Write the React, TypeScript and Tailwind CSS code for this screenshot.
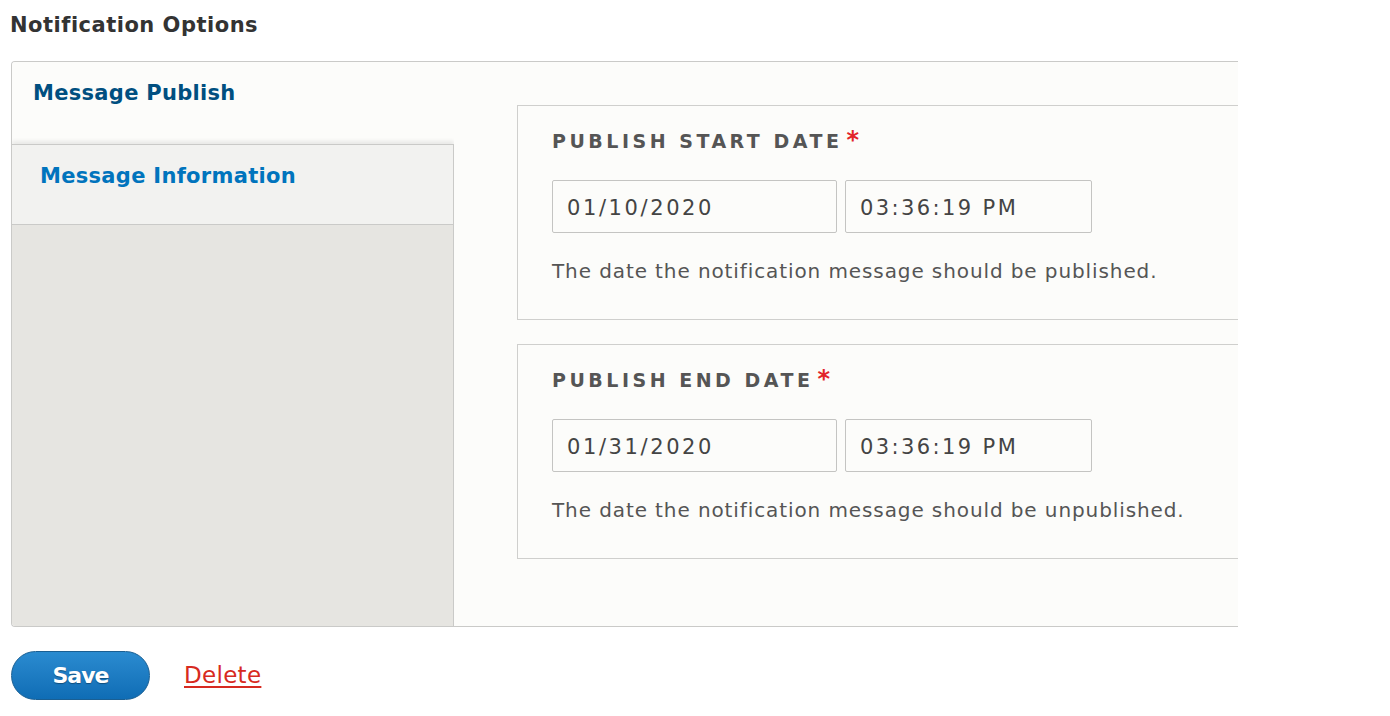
import React from 'react'

const FONT = "font-['Lucida_Grande','DejaVu_Sans',sans-serif]"

interface DateField {
  label: string
  date: string
  time: string
  description: string
}

const FIELDS: DateField[] = [
  {
    label: 'Publish start date',
    date: '01/10/2020',
    time: '03:36:19 PM',
    description: 'The date the notification message should be published.',
  },
  {
    label: 'Publish end date',
    date: '01/31/2020',
    time: '03:36:19 PM',
    description: 'The date the notification message should be unpublished.',
  },
]

function DateFieldset({ field }: { field: DateField }) {
  return (
    <fieldset className="w-[730px] border border-r-0 border-[#cfcfcd] pl-[34px] pt-[20px] pb-[36px]">
      <div className="flex items-start text-[19px] font-bold uppercase leading-[30px] tracking-[3.5px] text-[#555]">
        <span>{field.label}</span>
        <span className="ml-[4px] mt-[2px] text-[24px] leading-[24px] tracking-normal text-[#e2242b]">*</span>
      </div>
      <div className="mt-[24px] flex gap-[8px]">
        <input
          readOnly
          value={field.date}
          className="h-[53px] w-[285px] rounded-[2px] border border-[#c4c4c2] bg-[#fcfcfa] px-[14px] pt-[3px] text-[21px] tracking-[2.6px] text-[#444] outline-none"
        />
        <input
          readOnly
          value={field.time}
          className="h-[53px] w-[247px] rounded-[2px] border border-[#c4c4c2] bg-[#fcfcfa] px-[14px] pt-[3px] text-[21px] tracking-[2.4px] text-[#444] outline-none"
        />
      </div>
      <p className="mt-[26px] text-[20px] leading-[24px] tracking-[0.9px] text-[#555]">{field.description}</p>
    </fieldset>
  )
}

export default function App() {
  return (
    <div className={`${FONT} min-h-screen bg-white pl-[11px]`}>
      <h2 className="ml-[-1px] pt-[12px] text-[21px] font-bold leading-[26px] tracking-[0.5px] text-[#333]">
        Notification Options
      </h2>

      {/* Vertical tabs */}
      <div className="mt-[23px] flex h-[566px] w-[1227px] overflow-hidden rounded-l-[4px] border border-r-0 border-[#cacac8]">
        <div className="flex w-[442px] shrink-0 flex-col bg-[#e6e5e1]">
          <div className="h-[82px] bg-[#fcfcfa] px-[21px] pt-[16px] text-[21px] font-bold leading-[30px] tracking-[0.3px] text-[#004f80]">
            Message Publish
          </div>
          <div className="h-[81px] border-y border-r border-[#cacac8] bg-[#f2f2f0] px-[28px] pt-[16px] text-[21px] font-bold leading-[30px] tracking-[0.3px] text-[#0074bd] shadow-[0_-3px_4px_rgba(0,0,0,0.08)]">
            Message Information
          </div>
          <div className="flex-1 border-r border-[#cacac8]"></div>
        </div>
        <div className="flex flex-1 flex-col gap-[24px] bg-[#fcfcfa] pl-[63px] pt-[43px]">
          {FIELDS.map((f) => (
            <DateFieldset key={f.label} field={f} />
          ))}
        </div>
      </div>

      {/* Actions */}
      <div className="mt-[24px] flex items-center gap-[34px]">
        <button className="h-[49px] w-[139px] rounded-full border border-[#1a5f93] bg-gradient-to-b from-[#2a8bd0] to-[#0f6db5] text-[22px] font-bold tracking-[-1px] text-white [text-shadow:0_1px_1px_rgba(0,0,0,0.35)]">
          Save
        </button>
        <a href="#" className="text-[23px] tracking-[0.3px] text-[#d72a20] underline underline-offset-[3px]">
          Delete
        </a>
      </div>
    </div>
  )
}
